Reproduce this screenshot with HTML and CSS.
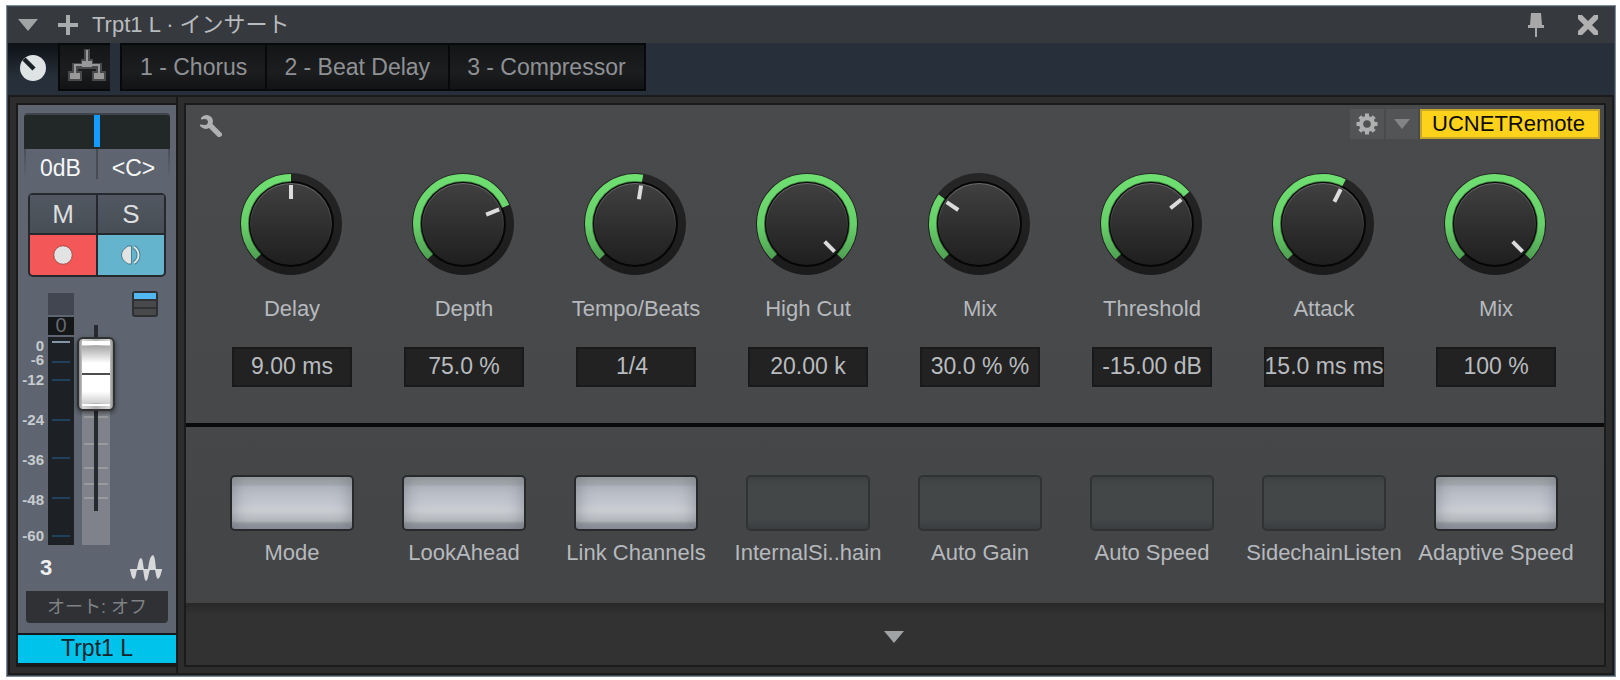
FILE: index.html
```html
<!DOCTYPE html>
<html lang="ja">
<head>
<meta charset="utf-8">
<title>Trpt1 L · インサート</title>
<link rel="stylesheet" href="styles.css">
</head>
<body>
<svg class="defs" width="0" height="0" aria-hidden="true">
  <defs>
    <linearGradient id="arc-fill" gradientUnits="userSpaceOnUse" x1="0" y1="0" x2="0" y2="86">
      <stop offset="0" stop-color="#70e072"/><stop offset="0.6" stop-color="#67d069"/><stop offset="1" stop-color="#4f9f52"/>
    </linearGradient>
    <linearGradient id="ring-fill" x1="0" y1="0" x2="0" y2="1">
      <stop offset="0" stop-color="#262626"/><stop offset="1" stop-color="#1b1b1b"/>
    </linearGradient>
    <linearGradient id="face-fill" x1="0" y1="0" x2="0" y2="1">
      <stop offset="0" stop-color="#404040"/><stop offset="1" stop-color="#1f1f1f"/>
    </linearGradient>
    <linearGradient id="rim-fill" x1="0" y1="0" x2="0" y2="1">
      <stop offset="0" stop-color="#6a6a6a"/><stop offset="0.5" stop-color="#3a3a3a"/><stop offset="0.8" stop-color="#1f1f1f"/>
    </linearGradient>
    <g id="knob-base">
      <circle cx="51" cy="51" r="51" fill="url(#ring-fill)"/>
      <circle cx="51" cy="51" r="43" fill="#0e0e0e"/>
    </g>
    <g id="knob-face">
      <circle cx="51" cy="51" r="43" fill="#000" opacity="0.45"/>
      <circle cx="51" cy="51" r="42" fill="#000" opacity="0.45"/>
      <circle cx="51" cy="51" r="41" fill="url(#rim-fill)"/>
      <circle cx="51" cy="51" r="40" fill="url(#face-fill)"/>
    </g>
    <path id="knob-mark" d="M51 12V26" stroke="#dcdcdc" stroke-width="4"/>
  </defs>
</svg>

<main class="window">
  <header class="titlebar">
    <button class="icon-btn menu-btn" aria-label="メニュー"><svg width="20" height="12" viewBox="0 0 20 12"><path d="M0 0H20L10 12Z" fill="#a1a3a5"/></svg></button>
    <button class="icon-btn" aria-label="追加"><svg width="20" height="20" viewBox="0 0 20 20"><path d="M10 0V20M0 10H20" stroke="#a9abad" stroke-width="4"/></svg></button>
    <h1 class="title">Trpt1 L · インサート</h1>
    <button class="icon-btn pin-btn" aria-label="ピン"><svg width="16" height="24" viewBox="0 0 16 24"><path d="M3 0H13L14 12H16V15H9V24H7V15H0V12H2Z" fill="#a8a8a8"/></svg></button>
    <button class="icon-btn" aria-label="閉じる"><svg width="20" height="20" viewBox="0 0 20 20"><path d="M0 0H4L10 6L16 0H20V4L14 10L20 16V20H16L10 14L4 20H0V16L6 10L0 4Z" fill="#b0b0b0"/></svg></button>
  </header>

  <nav class="toolbar">
    <button class="tool tool-active" aria-label="マクロ"><svg width="26" height="26" viewBox="0 0 26 26"><circle cx="13" cy="13" r="13" fill="#dfe3e4"/><path d="M4 4L14 14" stroke="#1c2127" stroke-width="4.5"/></svg></button>
    <button class="tool tool-dark" aria-label="ルーティング"><svg width="38" height="32" viewBox="0 0 38 32"><g fill="none" stroke="#48494a" stroke-width="6"><path d="M19 0V14M7 26V17H31V26"/></g><g fill="#48494a"><path d="M13 10H25V19H13ZM0 22H14V32H0ZM24 22H38V32H24Z"/></g><path d="M19 1V14M7 25V16H31V25" fill="none" stroke="#989898" stroke-width="2"/><path d="M14 12H24V18H14ZM2 24H12V30H2ZM26 24H36V30H26Z" fill="#989898"/></svg></button>
    <div class="tabs">
      <button class="tab">1 - Chorus</button>
      <button class="tab">2 - Beat Delay</button>
      <button class="tab">3 - Compressor</button>
    </div>
  </nav>

  <div class="rack">
    <aside class="channel">
      <div class="strip">
        <div class="strip-body">
          <div class="pan"><span class="pan-mark"></span></div>
          <div class="readouts"><span class="readout">0dB</span><span class="readout">&lt;C&gt;</span></div>
          <div class="modes">
            <button class="mode">M</button>
            <button class="mode">S</button>
            <button class="mode mode-rec" aria-label="録音"><svg width="20" height="20" viewBox="0 0 20 20"><circle cx="10" cy="10" r="9.3" fill="#e2e4e4" stroke="#a84a4a" stroke-width="1"/></svg></button>
            <button class="mode mode-mon" aria-label="モニター"><svg width="20" height="20" viewBox="0 0 20 20"><path d="M7 1H10.500V19H7Q0.500 15 0.500 10T7 1Z" fill="#e2e4e4" stroke="#477f8f"/><path d="M13 2Q17.500 5 17.500 10T13 18" fill="none" stroke="#477f8f" stroke-width="4"/><path d="M13 2Q17.500 5 17.500 10T13 18" fill="none" stroke="#dfe5e6" stroke-width="2"/></svg></button>
          </div>
          <div class="level">
            <svg class="meter" width="56" height="254" viewBox="0 0 56 254">
              <path d="M30 2H56V24H30Z" fill="#424650"/>
              <path d="M30 26H56V44H30Z" fill="#151618"/>
              <path d="M30 46H56V254H30Z" fill="#1d2126"/>
              <path d="M34 51H52" stroke="#8496a5" stroke-width="2"/>
              <path d="M34 71H52M34 89H52M34 129H52M34 167H52M34 207H52M34 245H52" stroke="#1e425b" stroke-width="2"/>
              <text class="meter-peak" x="43" y="41" text-anchor="middle">0</text>
              <g class="meter-scale" text-anchor="end">
                <text x="26" y="60">0</text><text x="26" y="74">-6</text><text x="26" y="94">-12</text><text x="26" y="134">-24</text><text x="26" y="174">-36</text><text x="26" y="214">-48</text><text x="26" y="250">-60</text>
              </g>
            </svg>
            <input class="fader" type="range" min="0" max="146" value="134" aria-label="音量">
            <button class="icon-btn view-btn" aria-label="表示"><svg width="26" height="26" viewBox="0 0 26 26"><rect x="1" y="1" width="24" height="24" rx="2" fill="#48494b" stroke="#2e3033" stroke-width="2"/><path d="M2 2H24V8H2Z" fill="#52b8f2"/><path d="M2 9H24M2 17H24" stroke="#303236" stroke-width="2"/></svg></button>
          </div>
          <div class="track-info">
            <strong class="track-no">3</strong>
            <svg width="32" height="26" viewBox="0 0 32 26" aria-hidden="true"><path d="M0 14H7C8 10 8.500 4 11 3C13 4 13 10 14 14H18C19 9 19.500 1 23 0C25 1 25.500 9 26 14H32V15C31 17 31 22 28 24C26 23 26 18 25 15H20C18.500 17 18.500 25 16 26C14 25 14 18 13 15H7C6 18 6 23 4 24C1 23 1 17 0 15Z" fill="#d6d8d9"/></svg>
          </div>
          <button class="auto-btn">オート: オフ</button>
        </div>
        <div class="track-name">Trpt1 L</div>
      </div>
    </aside>

    <section class="panel">
      <div class="knob-area">
        <div class="panel-head">
          <button class="icon-btn" aria-label="設定"><svg width="22" height="22" viewBox="0 0 22 22"><path d="M1 3Q3 0 7 0Q12.500 1 13 6L12.500 9L22 18.500V20.500L20 22H18L9 13Q4 15.500 0 11V9.500L5 10Q7.500 10 8 7Q7.500 4 5 4L1 4.500Z" fill="#b0b1b2"/></svg></button>
          <div class="panel-tools">
            <button class="small-btn gear-btn" aria-label="オプション"><svg width="22" height="22" viewBox="-11 -11 22 22"><g stroke="#aeafaf" stroke-width="4" stroke-linecap="butt"><path d="M0-10.500V10.500M-10.500 0H10.500M-7.300-7.300L7.300 7.300M-7.300 7.300L7.300-7.300"/></g><circle r="8" fill="#aeafaf"/><circle r="3.800" fill="#505153"/></svg></button>
            <button class="small-btn" aria-label="開く"><svg width="16" height="10" viewBox="0 0 16 10"><path d="M0 0H16L8 10Z" fill="#838486"/></svg></button>
            <button class="remote-btn">UCNETRemote</button>
          </div>
        </div>
        <div class="grid">
          <div class="cell">
            <div class="knob"><svg width="102" height="102" viewBox="0 0 102 102"><use href="#knob-base"/><path class="arc" pathLength="100" stroke-dasharray="50 200" d="M18.470 83.530A46 46 0 1 1 83.530 83.530"/><use href="#knob-face"/><use href="#knob-mark"/></svg><input type="range" value="50" aria-label="Delay"></div>
            <label class="name" for="v1">Delay</label><input class="value" id="v1" value="9.00 ms">
          </div>
          <div class="cell">
            <div class="knob"><svg width="102" height="102" viewBox="0 0 102 102"><use href="#knob-base"/><path class="arc" pathLength="100" stroke-dasharray="75 200" d="M18.470 83.530A46 46 0 1 1 83.530 83.530"/><use href="#knob-face"/><use href="#knob-mark" transform="rotate(68 51 51)"/></svg><input type="range" value="75" aria-label="Depth"></div>
            <label class="name" for="v2">Depth</label><input class="value" id="v2" value="75.0 %">
          </div>
          <div class="cell">
            <div class="knob"><svg width="102" height="102" viewBox="0 0 102 102"><use href="#knob-base"/><path class="arc" pathLength="100" stroke-dasharray="53.500 200" d="M18.470 83.530A46 46 0 1 1 83.530 83.530"/><use href="#knob-face"/><use href="#knob-mark" transform="rotate(9 51 51)"/></svg><input type="range" value="53" aria-label="Tempo/Beats"></div>
            <label class="name" for="v3">Tempo/Beats</label><input class="value value-short" id="v3" value="1/4">
          </div>
          <div class="cell">
            <div class="knob"><svg width="102" height="102" viewBox="0 0 102 102"><use href="#knob-base"/><path class="arc" pathLength="100" stroke-dasharray="100 200" d="M18.470 83.530A46 46 0 1 1 83.530 83.530"/><use href="#knob-face"/><use href="#knob-mark" transform="rotate(135 51 51)"/></svg><input type="range" value="100" aria-label="High Cut"></div>
            <label class="name" for="v4">High Cut</label><input class="value" id="v4" value="20.00 k">
          </div>
          <div class="cell">
            <div class="knob"><svg width="102" height="102" viewBox="0 0 102 102"><use href="#knob-base"/><path class="arc" pathLength="100" stroke-dasharray="30 200" d="M18.470 83.530A46 46 0 1 1 83.530 83.530"/><use href="#knob-face"/><use href="#knob-mark" transform="rotate(-56 51 51)"/></svg><input type="range" value="30" aria-label="Mix"></div>
            <label class="name" for="v5">Mix</label><input class="value" id="v5" value="30.0 % %">
          </div>
          <div class="cell">
            <div class="knob"><svg width="102" height="102" viewBox="0 0 102 102"><use href="#knob-base"/><path class="arc" pathLength="100" stroke-dasharray="68.500 200" d="M18.470 83.530A46 46 0 1 1 83.530 83.530"/><use href="#knob-face"/><use href="#knob-mark" transform="rotate(51 51 51)"/></svg><input type="range" value="69" aria-label="Threshold"></div>
            <label class="name" for="v6">Threshold</label><input class="value" id="v6" value="-15.00 dB">
          </div>
          <div class="cell">
            <div class="knob"><svg width="102" height="102" viewBox="0 0 102 102"><use href="#knob-base"/><path class="arc" pathLength="100" stroke-dasharray="60 200" d="M18.470 83.530A46 46 0 1 1 83.530 83.530"/><use href="#knob-face"/><use href="#knob-mark" transform="rotate(27 51 51)"/></svg><input type="range" value="60" aria-label="Attack"></div>
            <label class="name" for="v7">Attack</label><input class="value" id="v7" value="15.0 ms ms">
          </div>
          <div class="cell">
            <div class="knob"><svg width="102" height="102" viewBox="0 0 102 102"><use href="#knob-base"/><path class="arc" pathLength="100" stroke-dasharray="100 200" d="M18.470 83.530A46 46 0 1 1 83.530 83.530"/><use href="#knob-face"/><use href="#knob-mark" transform="rotate(135 51 51)"/></svg><input type="range" value="100" aria-label="Mix"></div>
            <label class="name" for="v8">Mix</label><input class="value" id="v8" value="100 %">
          </div>
        </div>
      </div>

      <div class="switch-area grid">
        <div class="cell"><input class="switch" type="checkbox" id="s1" checked><label class="name" for="s1">Mode</label></div>
        <div class="cell"><input class="switch" type="checkbox" id="s2" checked><label class="name" for="s2">LookAhead</label></div>
        <div class="cell"><input class="switch" type="checkbox" id="s3" checked><label class="name" for="s3">Link Channels</label></div>
        <div class="cell"><input class="switch" type="checkbox" id="s4"><label class="name" for="s4">InternalSi..hain</label></div>
        <div class="cell"><input class="switch" type="checkbox" id="s5"><label class="name" for="s5">Auto Gain</label></div>
        <div class="cell"><input class="switch" type="checkbox" id="s6"><label class="name" for="s6">Auto Speed</label></div>
        <div class="cell"><input class="switch" type="checkbox" id="s7"><label class="name" for="s7">SidechainListen</label></div>
        <div class="cell"><input class="switch" type="checkbox" id="s8" checked><label class="name" for="s8">Adaptive Speed</label></div>
      </div>

      <footer class="panel-foot">
        <button class="icon-btn" aria-label="展開"><svg width="20" height="12" viewBox="0 0 20 12"><path d="M0 0H20L10 12Z" fill="#a0a3a6"/></svg></button>
      </footer>
    </section>
  </div>
</main>
</body>
</html>
```

FILE: styles.css
```css
* { box-sizing: border-box; }

body {
  margin: 0;
  padding: 5px 4px 3px 6px;
  background: #fff;
  font-family: "Liberation Sans", "Noto Sans CJK JP", sans-serif;
  font-size: 22px;
  line-height: 26px;
}

button, input { margin: 0; padding: 0; border: 0; font: inherit; color: inherit; }
button { background: none; cursor: pointer; }
svg { display: block; }
.defs { position: absolute; }
.icon-btn { display: flex; }

.window {
  padding: 1px;
  border: 1px solid #7c8b96;
  background: #3d4751;
}

/* Title bar */
.titlebar {
  display: flex;
  align-items: center;
  height: 36px;
  padding: 0 16px 0 10px;
  background: #36393e;
}
.menu-btn { margin-right: 20px; }
.title {
  flex: 1;
  margin: 0 0 0 14px;
  font-size: 22px;
  font-weight: 400;
  line-height: 26px;
  color: #b8bbbe;
}
.pin-btn { margin-right: 34px; }

/* Toolbar */
.toolbar {
  display: flex;
  height: 52px;
  background: #27303a;
}
.tool {
  display: flex;
  align-items: center;
  justify-content: center;
  height: 50px;
}
.tool-active { width: 50px; background: linear-gradient(#0e1115, #27303a 70%); }
.tool-dark {
  align-items: flex-start;
  width: 52px;
  height: 48px;
  padding: 4px 0 0 3px;
  border: solid #08090a;
  border-width: 2px 0 2px 2px;
  background: linear-gradient(#131517, #1b1d1f 60%, #121315);
}
.tabs {
  display: flex;
  height: 48px;
  margin-left: 10px;
  border-left: 2px solid #08090a;
}
.tab {
  padding: 0 18px 0 17px;
  border: solid #08090a;
  border-width: 2px 2px 2px 0;
  background: linear-gradient(#131517, #1b1d1f 60%, #121315);
  font-size: 23px;
  color: #8f9194;
}
.tab:first-child { padding-left: 18px; }

/* Rack */
.rack {
  display: flex;
  border: 2px solid #1a1b1c;
  background: #2d2d2d;
}
.channel {
  display: flex;
  padding: 6px 0 6px 6px;
  border-right: 2px solid #1a1a1a;
}
.strip {
  display: flex;
  flex-direction: column;
  width: 160px;
  border: solid #1a1a1a;
  border-width: 2px 0 4px 2px;
}
.strip-body {
  flex: 1;
  display: flex;
  flex-direction: column;
  padding: 8px 0 10px;
  background: #5e6570;
}
.pan {
  display: flex;
  justify-content: center;
  height: 36px;
  margin: 0 6px;
  padding-bottom: 2px;
  border-top: 2px solid #3f444b;
  border-radius: 4px 4px 0 0;
  background: #222728;
}
.pan-mark { width: 6px; background: #149bff; }
.readouts {
  display: grid;
  grid-template-columns: 73px 73px;
  margin: 0 6px 12px;
  height: 32px;
  padding-top: 6px;
  font-size: 23px;
  color: #f6f7f8;
  background:
    linear-gradient(#454a53, #454a53) 72px 0 / 2px 30px no-repeat,
    linear-gradient(#4a505a, #5e6570) 0 0 / 2px 30px no-repeat,
    linear-gradient(#4a505a, #5e6570) 100% 0 / 2px 30px no-repeat;
}
.readout { text-align: center; }
.modes {
  display: grid;
  grid-template-columns: 66px 66px;
  grid-template-rows: 38px 40px;
  gap: 2px;
  margin: 0 10px 14px;
  padding: 2px;
  border-radius: 5px;
  background: #25282c;
}
.mode {
  display: flex;
  align-items: center;
  justify-content: center;
  background: linear-gradient(#525861, #484e56);
  font-size: 26px;
  color: #dcdedf;
}
.mode-rec { border-radius: 0 0 0 3px; background: #f35757; }
.mode-mon { border-radius: 0 0 3px 0; background: #64b4cd; }

.level { display: flex; align-items: flex-start; }
.meter-scale { font-size: 15px; font-weight: 700; fill: #c6cbcf; }
.meter-peak { font-size: 20px; fill: #66696d; }
.fader {
  appearance: none;
  writing-mode: vertical-lr;
  direction: rtl;
  width: 38px;
  height: 220px;
  margin: 34px 17px 0 3px;
  background:
    linear-gradient(#26292d, #26292d) 17px 0 / 4px 186px no-repeat,
    linear-gradient(#989a9e, #989a9e) 7px 91px / 24px 2px no-repeat,
    linear-gradient(#989a9e, #989a9e) 7px 118px / 24px 2px no-repeat,
    linear-gradient(#989a9e, #989a9e) 7px 142px / 24px 2px no-repeat,
    linear-gradient(#989a9e, #989a9e) 7px 158px / 24px 2px no-repeat,
    linear-gradient(#989a9e, #989a9e) 7px 172px / 24px 2px no-repeat,
    linear-gradient(#7f828a, #7f828a) 5px 20px / 28px 200px no-repeat;
}
.fader::-webkit-slider-thumb {
  appearance: none;
  width: 38px;
  height: 74px;
  border: 2px solid #2f3133;
  border-radius: 6px;
  background:
    linear-gradient(#fff, #fff) 50% 2px / 28px 4px no-repeat,
    linear-gradient(#4d4d4d, #4d4d4d) 50% 34px / 28px 2px no-repeat,
    linear-gradient(#a8a8a8, #fff 30%, #fff 80%, #d0d0d0) 50% 7px / 28px 57px no-repeat,
    linear-gradient(#fff, #fff) 50% 65px / 28px 2px no-repeat,
    linear-gradient(90deg, #8a8a8a, #d5d5d5 12%, #b0b0b0 50%, #d5d5d5 88%, #8a8a8a);
  box-shadow: 0 2px 4px rgba(0, 0, 0, 0.45);
}

.track-info {
  display: flex;
  align-items: center;
  justify-content: space-between;
  margin: 10px 14px 10px 22px;
}
.track-no { color: #f0f0f0; }
.auto-btn {
  height: 32px;
  margin: 0 8px;
  border-radius: 0 0 4px 4px;
  background: #2f3135;
  font-size: 18px;
  color: #808285;
}
.track-name {
  height: 30px;
  border-top: 2px solid #14181b;
  background: #00c3ec;
  font-size: 23px;
  text-align: center;
  color: #16242a;
}

/* Macro panel */
.panel {
  flex: 1;
  min-width: 0;
  margin: 6px;
  border: 2px solid #1b1b1b;
}
.panel-head {
  display: flex;
  align-items: flex-end;
  justify-content: space-between;
  height: 34px;
  padding: 4px 4px 0 14px;
  margin-bottom: 34px;
}
.panel-head > .icon-btn { margin-bottom: 2px; }
.panel-tools { display: flex; gap: 2px; }
.small-btn {
  display: flex;
  align-items: center;
  justify-content: center;
  width: 32px;
  height: 30px;
  background: #535456;
}
.gear-btn { width: 34px; }
.remote-btn {
  width: 180px;
  height: 30px;
  padding: 0 3px 2px 0;
  border: 2px solid #c7a52b;
  background: #fdd21b;
  color: #0d0b02;
}
.knob-area {
  padding-bottom: 36px;
  border-bottom: 4px solid #0a0a0a;
  background: linear-gradient(#494a4c, #46484a);
}
.grid {
  display: grid;
  grid-template-columns: repeat(8, minmax(0, 1fr));
  padding: 0 22px 0 20px;
}
.cell {
  display: flex;
  flex-direction: column;
  align-items: center;
}
.knob { position: relative; margin: 0 2px 21px 0; }
.knob input {
  position: absolute;
  inset: 0;
  width: 100%;
  height: 100%;
  opacity: 0;
}
.arc { fill: none; stroke: url(#arc-fill); stroke-width: 8; }
.name { white-space: nowrap; color: #b6b9bd; }
.value {
  width: 120px;
  height: 40px;
  margin-top: 25px;
  padding-bottom: 2px;
  background: #222;
  box-shadow: inset 0 0 0 2px #1a1a1a;
  font-size: 23px;
  text-align: center;
  color: #b8bbbf;
}
.value-short { padding-right: 8px; }
.switch-area {
  padding-top: 48px;
  padding-bottom: 37px;
  background: linear-gradient(#464749, #434446);
}
.switch {
  appearance: none;
  width: 124px;
  height: 56px;
  margin: 0 0 9px;
  border: 2px solid #303234;
  border-radius: 5px;
  background: linear-gradient(#3e4142, #434748 20%, #434748 80%, #3a3d3f);
}
.switch:checked {
  border-color: #28292b;
  background: linear-gradient(#a9b0b3 0, #aab0b4 15%, #b6bac3 18%, #c3c6cf 50%, #cbced3 64%, #bcbfc3 84%, #9da1a9 90%, #999da5);
  box-shadow: inset 0 0 18px rgba(75, 80, 90, 0.5);
}
.panel-foot {
  display: flex;
  align-items: center;
  justify-content: center;
  height: 62px;
  padding: 5px 2px 0 0;
  background: linear-gradient(#282828, #323232 12px);
}
```
